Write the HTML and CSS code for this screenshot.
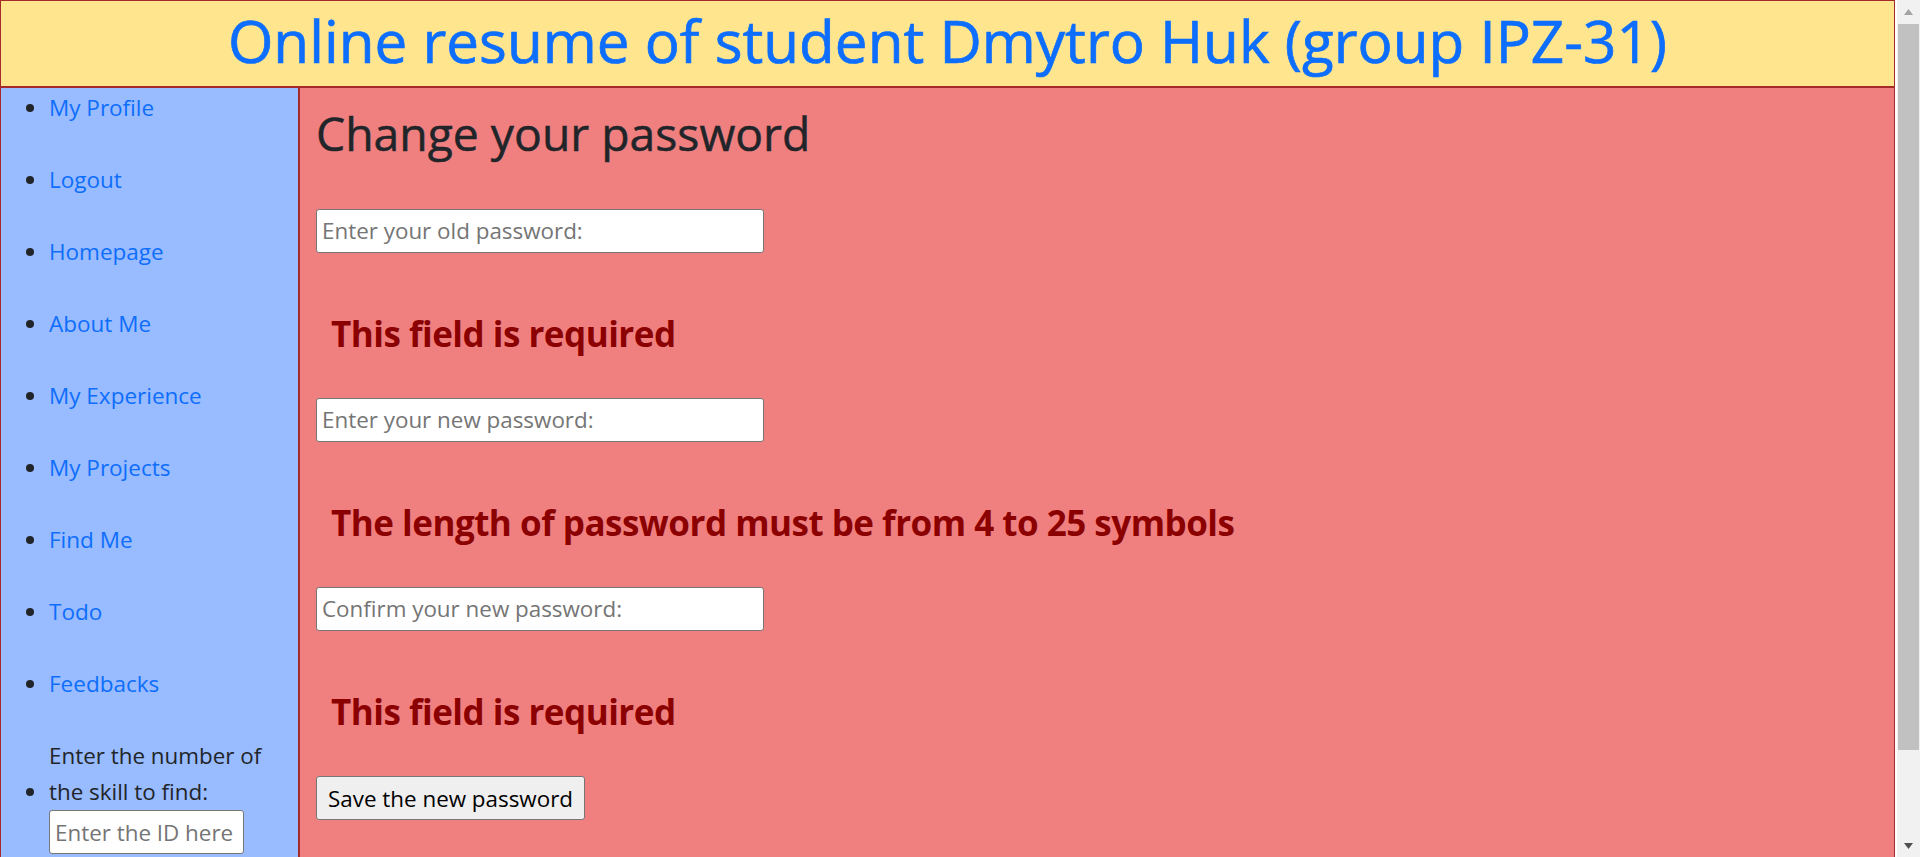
FILE: index.html
```html
<!DOCTYPE html>
<html lang="en">
<head>
<meta charset="utf-8">
<title>Change your password</title>
<link rel="stylesheet" href="styles.css">
</head>
<body>
<div class="page">
  <header class="site-header">
    <h1 class="site-title">Online resume of student Dmytro Huk (group IPZ-31)</h1>
  </header>
  <div class="layout">
    <nav class="sidebar">
      <ul class="nav-list">
        <li><a href="#">My Profile</a></li>
        <li><a href="#">Logout</a></li>
        <li><a href="#">Homepage</a></li>
        <li><a href="#">About Me</a></li>
        <li><a href="#">My Experience</a></li>
        <li><a href="#">My Projects</a></li>
        <li><a href="#">Find Me</a></li>
        <li><a href="#">Todo</a></li>
        <li><a href="#">Feedbacks</a></li>
        <li class="skill-item"><label class="skill-label" for="skill">Enter the number of the skill to find:</label><br><input id="skill" class="skill-input" type="text" placeholder="Enter the ID here"></li>
      </ul>
    </nav>
    <main class="content">
      <h2 class="page-title">Change your password</h2>
      <form class="pw-form">
        <div class="field">
          <input class="text-input" type="password" placeholder="Enter your old password:">
          <h3 class="error">This field is required</h3>
        </div>
        <div class="field">
          <input class="text-input" type="password" placeholder="Enter your new password:">
          <h3 class="error">The length of password must be from 4 to 25 symbols</h3>
        </div>
        <div class="field">
          <input class="text-input" type="password" placeholder="Confirm your new password:">
          <h3 class="error">This field is required</h3>
        </div>
        <button class="save-btn" type="button">Save the new password</button>
      </form>
    </main>
  </div>
</div>
<div class="scrollbar" aria-hidden="true">
  <div class="sb-btn"><svg width="9" height="6" viewBox="0 0 9 6"><path d="M0 6 L4.5 0 L9 6 Z" fill="#a3a3a3"/></svg></div>
  <div class="sb-track"><div class="sb-thumb"></div></div>
  <div class="sb-btn"><svg width="9" height="6" viewBox="0 0 9 6"><path d="M0 0 L9 0 L4.5 6 Z" fill="#505050"/></svg></div>
</div>
</body>
</html>
```
FILE: styles.css
```css
html, body {
  margin: 0;
  padding: 0;
}
html {
  overflow: hidden;
}
body {
  display: flex;
  align-items: flex-start;
  font-family: "Open Sans", "Noto Sans", sans-serif;
  color: #212529;
  background: #ffffff;
}
.page {
  flex: 0 0 1895px;
  width: 1895px;
}
.site-header {
  background: #ffe68e;
  border: 1px solid #a52a2a;
  padding: 5px 0 10px;
}
.site-title {
  margin: 0;
  text-align: center;
  font-size: 58.4px;
  font-weight: 400;
  line-height: 70px;
  color: #0d6efd;
  -webkit-text-stroke: 0.7px #0d6efd;
}
.layout {
  display: flex;
  align-items: stretch;
}
.sidebar {
  width: 299px;
  box-sizing: border-box;
  flex: none;
  background: #99bbff;
  border: 1px solid #a52a2a;
}
.nav-list {
  margin: 0;
  padding: 2px 16px 0 48px;
  font-size: 22.4px;
  line-height: 36px;
}
.nav-list li {
  margin-bottom: 36px;
}
.nav-list a {
  color: #0d6efd;
  text-decoration: none;
  font-size: 22.5px;
}
.skill-label {
  display: inline-block;
  width: 225px;
}
.skill-input {
  box-sizing: border-box;
  width: 195px;
  height: 44px;
  padding: 0 5px;
  border: 1px solid #767676;
  border-radius: 3px;
  background: #fff;
  font-family: inherit;
  font-size: 22.4px;
  vertical-align: top;
}
.content {
  flex: 1;
  background: #f08080;
  border: 1px solid #a52a2a;
  padding: 18px 16px 60px;
}
.page-title {
  margin: 0 0 47px;
  font-size: 46.3px;
  font-weight: 400;
  line-height: 1.2;
  color: #212529;
  -webkit-text-stroke: 0.5px #212529;
}
.pw-form {
  margin: 0;
}
.field {
  display: flex;
  flex-direction: column;
  align-items: flex-start;
}
.text-input {
  box-sizing: border-box;
  width: 448px;
  height: 44px;
  padding: 0 5px;
  border: 1px solid #767676;
  border-radius: 3px;
  background: #fff;
  font-family: inherit;
  font-size: 22.4px;
  color: #212529;
}
::placeholder {
  color: #757575;
  opacity: 1;
}
.error {
  margin: 60px 0 43.2px 15px;
  font-size: 35px;
  font-weight: 700;
  letter-spacing: -0.5px;
  line-height: 1.2;
  color: #8b0000;
}
.save-btn {
  box-sizing: border-box;
  height: 44px;
  padding: 0 11px;
  border: 1px solid #767676;
  border-radius: 3px;
  background: #efefef;
  font-family: inherit;
  font-size: 22.4px;
  color: #000;
}
.scrollbar {
  flex: none;
  width: 23px;
  height: 100vh;
  margin-left: 2px;
  display: flex;
  flex-direction: column;
  background: #f1f1f1;
}
.sb-btn {
  flex: none;
  height: 23px;
  display: flex;
  align-items: center;
  justify-content: center;
}
.sb-track {
  flex: 1;
  padding-top: 1px;
}
.sb-thumb {
  height: 726px;
  margin: 0 1px;
  background: #c1c1c1;
}
```
